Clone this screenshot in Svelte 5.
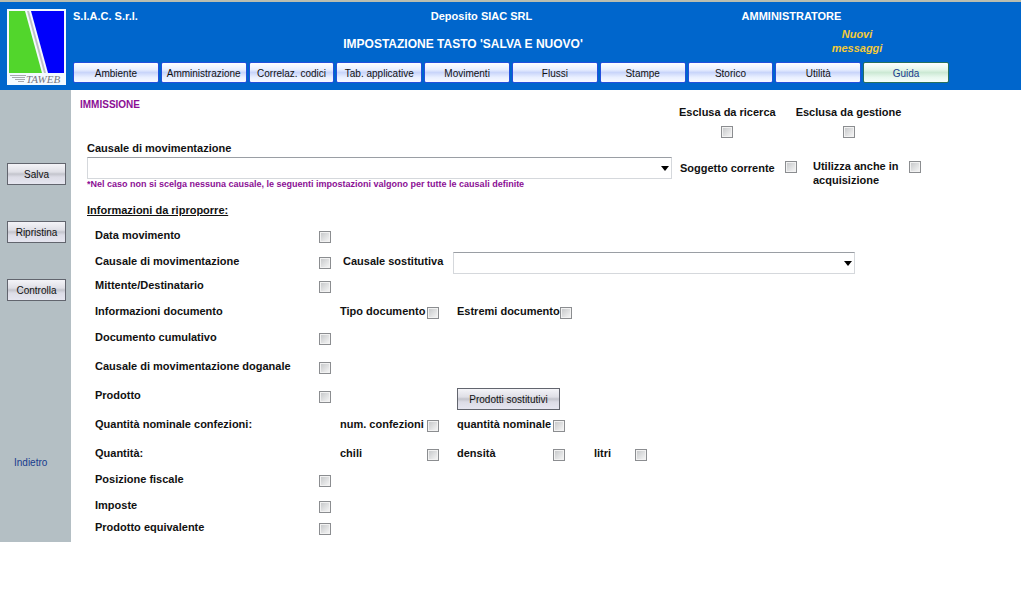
<script lang="ts">
	type Field = { id: string; label: string };
	type Row = { id?: string; label: string; size: 'xs' | 'sm' | 'md' | 'lg'; fields?: Field[]; extra?: 'causale' | 'prodotti' };

	const menu = ['Ambiente', 'Amministrazione', 'Correlaz. codici', 'Tab. applicative', 'Movimenti', 'Flussi', 'Stampe', 'Storico', 'Utilità', 'Guida'];
	const actions = ['Salva', 'Ripristina', 'Controlla'];

	const rows: Row[] = [
		{ id: 'data', label: 'Data movimento', size: 'md' },
		{ id: 'causale-mov', label: 'Causale di movimentazione', size: 'sm', extra: 'causale' },
		{ id: 'mittente', label: 'Mittente/Destinatario', size: 'md' },
		{
			label: 'Informazioni documento',
			size: 'md',
			fields: [
				{ id: 'tipo-doc', label: 'Tipo documento' },
				{ id: 'estremi-doc', label: 'Estremi documento' }
			]
		},
		{ id: 'cumulativo', label: 'Documento cumulativo', size: 'lg' },
		{ id: 'doganale', label: 'Causale di movimentazione doganale', size: 'lg' },
		{ id: 'prodotto', label: 'Prodotto', size: 'lg', extra: 'prodotti' },
		{
			label: 'Quantità nominale confezioni:',
			size: 'lg',
			fields: [
				{ id: 'num-conf', label: 'num. confezioni' },
				{ id: 'qta-nom', label: 'quantità nominale' }
			]
		},
		{
			label: 'Quantità:',
			size: 'md',
			fields: [
				{ id: 'chili', label: 'chili' },
				{ id: 'densita', label: 'densità' },
				{ id: 'litri', label: 'litri' }
			]
		},
		{ id: 'fiscale', label: 'Posizione fiscale', size: 'md' },
		{ id: 'imposte', label: 'Imposte', size: 'xs' },
		{ id: 'equivalente', label: 'Prodotto equivalente', size: 'xs' }
	];
</script>

{#snippet dropdown(id: string)}
	<div class="dropdown">
		<select {id}><option></option></select>
		<svg width="8" height="5" viewBox="0 0 8 5"><path d="M0 0h8L4 5z" /></svg>
	</div>
{/snippet}

<header>
	<svg class="logo" width="59" height="76" viewBox="0 0 59 76" role="img" aria-label="TAWEB">
		<rect width="59" height="76" fill="#f4faff" />
		<path d="M2 2H18L35 64H2z" fill="#52d62c" />
		<path d="M24 2H57V64H41z" fill="#0000fb" />
		<path d="M20 2h2L39 64h-2z" fill="#c0c0c6" />
		<path d="M3 66.5H19M5 68.5H18M8 70.5H18M11 72.5H17" stroke="#a9a9af" />
		<text x="19" y="74">TAWEB</text>
	</svg>
	<div class="head">
		<div class="info">
			<span>S.I.A.C. S.r.l.</span>
			<span class="center">Deposito SIAC SRL</span>
			<span class="center">AMMINISTRATORE</span>
		</div>
		<div class="title">
			<h1>IMPOSTAZIONE TASTO 'SALVA E NUOVO'</h1>
			<a href="#messaggi">Nuovi<br />messaggi</a>
		</div>
		<nav>
			{#each menu as item}
				<button class:guide={item === 'Guida'}>{item}</button>
			{/each}
		</nav>
	</div>
</header>

<div class="page">
	<aside>
		{#each actions as action}
			<button class="btn">{action}</button>
		{/each}
		<a href="#indietro">Indietro</a>
	</aside>

	<main>
		<div class="top">
			<h2>IMMISSIONE</h2>
			<label class="stacked">Esclusa da ricerca <input type="checkbox" /></label>
			<label class="stacked">Esclusa da gestione <input type="checkbox" /></label>
		</div>

		<label class="causale-label" for="causale">Causale di movimentazione</label>
		<div class="causale">
			{@render dropdown('causale')}
			<label for="soggetto">Soggetto corrente</label>
			<input id="soggetto" type="checkbox" />
			<label class="wide" for="acquisizione">Utilizza anche in acquisizione</label>
			<input id="acquisizione" type="checkbox" />
		</div>
		<p class="note">*Nel caso non si scelga nessuna causale, le seguenti impostazioni valgono per tutte le causali definite</p>

		<h3>Informazioni da riproporre:</h3>
		<div class="rows">
			{#each rows as row}
				<div class="row {row.size}">
					{#if row.id}
						<label for={row.id}>{row.label}</label>
						<input id={row.id} type="checkbox" />
					{:else}
						<span>{row.label}</span>
						<span></span>
					{/if}
					{#if row.extra === 'causale'}
						<div class="substitute">
							<label for="sostitutiva">Causale sostitutiva</label>
							{@render dropdown('sostitutiva')}
						</div>
					{:else if row.extra === 'prodotti'}
						<div class="products">
							<button class="btn">Prodotti sostitutivi</button>
						</div>
					{/if}
					{#each row.fields ?? [] as field}
						<label for={field.id}>{field.label}</label>
						<input id={field.id} type="checkbox" />
					{/each}
				</div>
			{/each}
		</div>
	</main>
</div>

<style>
	:global(body) {
		background: #fff;
		color: #111;
		font: bold 11px/14px "Liberation Sans", Arial, sans-serif;
	}

	h1, h2, h3, p {
		margin: 0;
	}

	a {
		text-decoration: none;
	}

	header {
		display: flex;
		gap: 7px;
		box-sizing: border-box;
		margin-right: 3px;
		padding: 7px 0 5px 7px;
		border-top: 2px solid #b9bdb0;
		background: #0066cc;
		color: #fff;
	}

	.logo {
		display: block;
	}

	.logo text {
		font: italic 11px "Liberation Serif", serif;
		fill: #77777f;
	}

	.head {
		flex: 1;
		max-width: 876px;
	}

	.info {
		display: grid;
		grid-template-columns: 254px 309px 311px;
	}

	.center {
		text-align: center;
	}

	.title {
		display: grid;
		grid-template-columns: 694px 180px;
		height: 39px;
	}

	.title h1 {
		padding: 14px 0 0 86px;
		font-size: 12px;
		line-height: 14px;
		text-align: center;
	}

	.title a {
		padding-top: 4px;
		color: #f5cb38;
		font-style: italic;
		text-align: center;
	}

	nav {
		display: grid;
		grid-template-columns: repeat(10, 1fr);
		gap: 2px;
	}

	nav button {
		height: 21px;
		padding: 2px 0 0;
		border: 1px solid #2350dc;
		border-radius: 2px;
		background: linear-gradient(#fff, #e8eeff 35%, #c9d5fa 50%, #e9efff 75%, #f8faff);
		color: #111;
		font: 10px "Liberation Sans", Arial, sans-serif;
		white-space: nowrap;
	}

	nav .guide {
		border-color: #28705c;
		background: linear-gradient(#fff, #e4f6e9 35%, #cce9d4 50%, #e8f8ee 75%, #f6fffa);
		color: #173b8c;
	}

	.page {
		display: flex;
	}

	aside {
		display: flex;
		flex-direction: column;
		gap: 36px;
		flex: 0 0 71px;
		box-sizing: border-box;
		padding: 73px 5px 0 7px;
		background: #b4bfc4;
	}

	aside a {
		margin-top: 119px;
		padding-left: 7px;
		color: #173b8c;
		font-size: 10px;
		font-weight: normal;
	}

	.btn {
		height: 22px;
		padding: 0;
		border: 1px solid #62656e;
		background: linear-gradient(#f4f4f8, #dfdfe6 40%, #c3c4cc 50%, #dcdce6 65%, #e6e6f0);
		color: #111;
		font: 10px "Liberation Sans", Arial, sans-serif;
	}

	main {
		flex: 1;
		min-width: 0;
		padding: 8px 16px 0;
	}

	.top {
		display: flex;
		gap: 20px;
		height: 43px;
		margin-left: -7px;
	}

	h2 {
		flex: 0 0 579px;
		color: #8b0f95;
		font-size: 10px;
		line-height: 14px;
	}

	.stacked {
		display: flex;
		flex-direction: column;
		align-items: center;
		gap: 7px;
		padding-top: 7px;
	}

	input {
		appearance: none;
		flex: none;
		box-sizing: border-box;
		width: 12px;
		height: 12px;
		margin: 0;
		border: 1px solid #8b8d90;
		background: linear-gradient(135deg, #c3c5c7, #f8f8f8);
		box-shadow: inset 0 0 0 1px #f2f2f2;
	}

	input:checked {
		background: #52616b;
	}

	.causale-label {
		display: block;
		margin-bottom: 2px;
	}

	.causale {
		display: grid;
		grid-template-columns: minmax(200px, 585px) 97px 12px 96px 12px;
		column-gap: 8px;
		align-items: start;
		height: 22px;
	}

	.causale label,
	.causale input {
		margin-top: 4px;
	}

	.causale .wide {
		margin-top: 2px;
		padding-left: 8px;
	}

	.dropdown {
		position: relative;
		flex: 1;
	}

	.dropdown select {
		appearance: none;
		display: block;
		width: 100%;
		height: 22px;
		padding: 0 16px 0 4px;
		border: 1px solid #d5d8dc;
		border-top-color: #9a9ea4;
		border-radius: 0;
		background: #fff;
	}

	.dropdown svg {
		position: absolute;
		right: 3px;
		top: 9px;
		pointer-events: none;
	}

	.note {
		color: #8b0f95;
		font-size: 9px;
		line-height: 11px;
	}

	h3 {
		margin-top: 13px;
		font-size: 11px;
		line-height: 14px;
		text-decoration: underline;
	}

	.rows {
		padding: 11px 0 0 8px;
	}

	.row {
		display: grid;
		grid-template-columns: 224px 21px 87px 30px minmax(96px, max-content) 41px 41px auto;
		justify-content: start;
		align-items: start;
		white-space: nowrap;
	}

	.row input {
		margin-top: 3px;
	}

	.xs {
		height: 22px;
	}

	.sm {
		height: 24px;
	}

	.md {
		height: 26px;
	}

	.lg {
		height: 29px;
	}

	.substitute {
		display: flex;
		grid-column: 3 / -1;
		gap: 10px;
		width: 512px;
		margin: -2px 0 0 3px;
	}

	.substitute label {
		padding-top: 2px;
	}

	.products {
		grid-column: 5 / -1;
	}

	.products .btn {
		width: 103px;
	}
</style>
